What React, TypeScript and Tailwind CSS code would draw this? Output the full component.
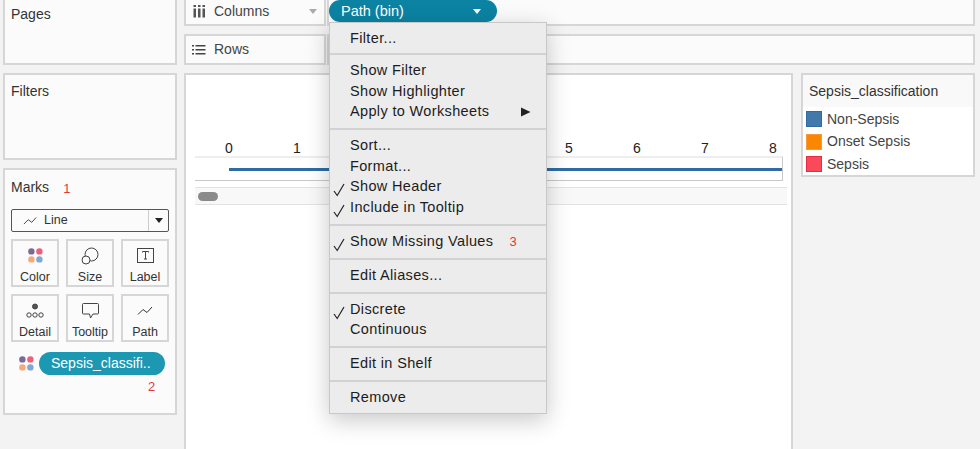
const font = { fontFamily: '"Liberation Sans", Arial, sans-serif' };

function ColorDots() {
  return (
    <svg width="15" height="15" viewBox="0 0 15 15">
      <circle cx="3.4" cy="3.4" r="3.2" fill="#7b6a97" />
      <circle cx="11.4" cy="3.4" r="3.2" fill="#ef5f7a" />
      <circle cx="3.4" cy="11.4" r="3.2" fill="#f7a77a" />
      <circle cx="11.4" cy="11.4" r="3.2" fill="#7ea9d2" />
    </svg>
  );
}

function LineGlyph({ w = 16 }: { w?: number }) {
  return (
    <svg width={w} height="10" viewBox="0 0 16 10" fill="none" stroke="#333" strokeWidth="1">
      <path d="M1 8.5 L6 3.5 L10 6.5 L15 1" />
    </svg>
  );
}

function Tile({ label, icon }: { label: string; icon: React.ReactNode }) {
  return (
    <div className="flex h-[48px] w-[48px] flex-col items-center border-2 border-[#d6d6d6] bg-[#fbfbfb]">
      <div className="mt-[2px] flex h-[25px] items-center justify-center">{icon}</div>
      <div className="mt-[2px] text-[12.5px] leading-[15px] text-[#333]">{label}</div>
    </div>
  );
}

function Check() {
  return (
    <svg className="absolute left-[-17px] top-[6px]" width="12" height="14" viewBox="0 0 12 14" fill="none" stroke="#222" strokeWidth="1.2">
      <path d="M1 8 L4.2 12.5 L11 1" />
    </svg>
  );
}

type MenuItem = { label: string; checked?: boolean; arrow?: boolean; note?: string };

function MenuGroup({ items, first, last }: { items: MenuItem[]; first?: boolean; last?: boolean }) {
  return (
    <div
      className={`pl-[20px] pr-[15px] ${first ? "pt-[5.5px]" : "pt-[6px]"} ${
        last ? "pb-[4px]" : first ? "border-b-2 border-[#d2d2d2] pb-[4px]" : "border-b-2 border-[#d2d2d2] pb-[5.5px]"
      }`}
    >
      {items.map((item) => (
        <div key={item.label} className="relative flex h-[20.5px] items-center text-[14.5px] tracking-[0.35px] text-[#1c1c1c]">
          {item.checked && <Check />}
          <span>{item.label}</span>
          {item.note && <span className="ml-[16px] text-[13px] text-[#e5383b]">{item.note}</span>}
          {item.arrow && (
            <svg className="ml-auto" width="10" height="10" viewBox="0 0 10 10">
              <path d="M0 0.5 L9.5 5 L0 9.5 Z" fill="#222" />
            </svg>
          )}
        </div>
      ))}
    </div>
  );
}

export default function App() {
  // 2, 3 and 4 sit behind the open menu
  const ticks = ["0", "1", "", "", "", "5", "6", "7", "8"];
  return (
    <div style={font} className="relative flex h-[449px] w-[980px] gap-[7px] overflow-hidden bg-[#f3f3f3] pl-[3px] pr-[5px]">
      {/* left cards */}
      <div className="flex w-[174px] shrink-0 flex-col gap-[8px]">
        <div className="h-[65px] border-2 border-t-0 border-[#d6d6d6] bg-[#fbfbfb] px-[6px] pt-[6px] text-[14px] leading-[17px] text-[#333]">Pages</div>
        <div className="h-[87px] border-2 border-[#d6d6d6] bg-[#fbfbfb] px-[6px] pt-[8px] text-[14px] leading-[17px] text-[#333]">Filters</div>
        <div className="h-[247px] border-2 border-[#d6d6d6] bg-[#fbfbfb] px-[6px] pt-[9px]">
          <div className="flex text-[14px] leading-[17px] text-[#333]">
            Marks <span className="ml-[14px] mt-[1px] text-[13px] text-[#e5383b]">1</span>
          </div>
          <div className="mt-[12px] flex h-[23px] w-[158px] items-center rounded-[2px] border-[1.5px] border-[#555] bg-[#fbfbfb] text-[12.5px] text-[#333]">
            <div className="ml-[11px]"><LineGlyph w={14} /></div>
            <span className="ml-[7px]">Line</span>
            <div className="ml-auto flex h-full w-[20px] items-center justify-center border-l border-[#ccc]">
              <svg width="8" height="5" viewBox="0 0 8 5"><path d="M0 0 H8 L4 5 Z" fill="#222" /></svg>
            </div>
          </div>
          <div className="mt-[7px] grid grid-cols-[48px_48px_48px] gap-x-[7px] gap-y-[7px]">
            <Tile label="Color" icon={<ColorDots />} />
            <Tile
              label="Size"
              icon={
                <svg width="18" height="18" viewBox="0 0 18 18" fill="none" stroke="#444" strokeWidth="1">
                  <circle cx="10.5" cy="7.5" r="6.5" />
                  <circle cx="5" cy="13" r="4" fill="#fbfbfb" />
                </svg>
              }
            />
            <Tile
              label="Label"
              icon={
                <svg width="17" height="15" viewBox="0 0 17 15" fill="none" stroke="#444" strokeWidth="1">
                  <rect x="0.5" y="0.5" width="16" height="14" />
                  <path d="M5.5 4.5 V3.5 H11.5 V4.5 M8.5 3.5 V11 M7 11 H10" />
                </svg>
              }
            />
            <Tile
              label="Detail"
              icon={
                <svg width="18" height="16" viewBox="0 0 18 16" fill="none" stroke="#444" strokeWidth="1">
                  <circle cx="9" cy="3.5" r="2.5" fill="#555" />
                  <circle cx="3" cy="12" r="2.2" />
                  <circle cx="9" cy="12" r="2.2" />
                  <circle cx="15" cy="12" r="2.2" />
                </svg>
              }
            />
            <Tile
              label="Tooltip"
              icon={
                <svg width="17" height="16" viewBox="0 0 17 16" fill="none" stroke="#444" strokeWidth="1">
                  <path d="M1.5 0.5 H15.5 Q16.5 0.5 16.5 1.5 V10 Q16.5 11 15.5 11 H11 L8.5 15 L7.5 11 H1.5 Q0.5 11 0.5 10 V1.5 Q0.5 0.5 1.5 0.5 Z" />
                </svg>
              }
            />
            <Tile label="Path" icon={<LineGlyph />} />
          </div>
          <div className="mt-[10px] flex items-center">
            <div className="ml-[8px]"><ColorDots /></div>
            <div className="ml-[5px] flex h-[23px] w-[126px] items-center rounded-full bg-[#1c98b3] pl-[12px] text-[14px] text-white">Sepsis_classifi..</div>
          </div>
          <div className="mt-[4px] pl-[137px] text-[13px] leading-[16px] text-[#e5383b]">2</div>
        </div>
      </div>

      {/* shelves and view */}
      <div className="flex w-[791px] shrink-0 flex-col gap-[8px]">
        <div className="flex h-[26px] gap-[1px]">
          <div className="flex w-[142px] items-center border-2 border-t-0 border-[#d6d6d6] bg-[#fbfbfb] pl-[7px] pb-[1px] text-[14px] text-[#444]">
            <svg width="13" height="13" viewBox="0 0 13 13" fill="#555">
              <rect x="0.5" y="0" width="2.5" height="2" />
              <rect x="5" y="0" width="2.5" height="2" />
              <rect x="9.5" y="0" width="2.5" height="2" />
              <rect x="0.5" y="3.5" width="2.5" height="9" />
              <rect x="5" y="3.5" width="2.5" height="9" />
              <rect x="9.5" y="3.5" width="2.5" height="9" />
            </svg>
            <span className="ml-[8px]">Columns</span>
            <svg className="ml-auto mr-[7px]" width="8" height="5" viewBox="0 0 8 5"><path d="M0 0 H8 L4 5 Z" fill="#aaa" /></svg>
          </div>
          <div className="flex-1 border-2 border-t-0 border-[#d6d6d6] bg-[#fbfbfb]">
            <div className="flex h-[22px] w-[168px] items-center rounded-full bg-[#0c83a3] pl-[12px] pr-[16px] pt-[1px] text-[14.5px] text-white">
              Path (bin)
              <svg className="ml-auto" width="8" height="5" viewBox="0 0 8 5"><path d="M0 0 H8 L4 5 Z" fill="#fff" /></svg>
            </div>
          </div>
        </div>
        <div className="flex h-[31px] gap-[1px]">
          <div className="flex w-[142px] items-center border-2 border-[#d6d6d6] bg-[#fbfbfb] pl-[6px] text-[14px] text-[#444]">
            <svg width="14" height="12" viewBox="0 0 14 12" fill="#444">
              <rect x="0" y="1" width="2" height="1.5" />
              <rect x="3.5" y="1" width="10" height="1.5" />
              <rect x="0" y="5" width="2" height="1.5" />
              <rect x="3.5" y="5" width="10" height="1.5" />
              <rect x="0" y="9" width="2" height="1.5" />
              <rect x="3.5" y="9" width="10" height="1.5" />
            </svg>
            <span className="ml-[8px]">Rows</span>
          </div>
          <div className="flex-1 border-2 border-[#d6d6d6] bg-[#fbfbfb]" />
        </div>

        <div className="flex flex-1 gap-[8px]">
          <div className="w-[609px] border-2 border-b-0 border-[#d6d6d6] bg-white pl-[9px] pt-[65px]">
            <div className="flex h-[16px] items-center text-[14px] text-[#222]">
              {ticks.map((t, i) => (
                <div key={i} className="w-[68px] shrink-0 text-center">{t}</div>
              ))}
            </div>
            <div className="flex h-[25px] w-[588px] items-center border border-t-2 border-l-0 border-[#dcdcdc] border-t-[#eeeeee] border-r-[#c9c9c9] border-b-[#c9c9c9] pl-[34px]">
              <div className="h-[3px] w-full bg-[#2f6ca3]" />
            </div>
            <div className="mt-[6px] flex h-[18px] w-[592px] items-center border-y border-[#e2e2e2] bg-[#f8f8f8] pl-[3px]">
              <div className="h-[9px] w-[20px] rounded-full bg-[#8a8a8a]" />
            </div>
          </div>
          <div className="h-[104px] w-[174px] border-2 border-[#d6d6d6] bg-white">
            <div className="flex h-[32px] items-center bg-[#f9f9f9] pl-[6px] text-[14px] text-[#333]">Sepsis_classification</div>
            <div className="flex flex-col gap-[6.5px] pl-[3px] pt-[4px]">
              {[
                { name: "Non-Sepsis", swatch: "bg-[#4279a8] border-[#2f6ca3]" },
                { name: "Onset Sepsis", swatch: "bg-[#fb8600] border-[#f59b3d]" },
                { name: "Sepsis", swatch: "bg-[#f84a58] border-[#e82a48]" },
              ].map((row) => (
                <div key={row.name} className="flex h-[16px] items-center">
                  <div className={`h-[16px] w-[16px] border ${row.swatch}`} />
                  <span className="ml-[5px] text-[14px] text-[#444]">{row.name}</span>
                </div>
              ))}
            </div>
          </div>
        </div>
      </div>

      {/* open pill menu */}
      <div className="absolute left-[329px] top-[22px] w-[218px] border border-[#c8c8c8] bg-[#ececec] shadow-[0_6px_22px_rgba(0,0,0,0.22)]">
        <MenuGroup first items={[{ label: "Filter..." }]} />
        <MenuGroup items={[{ label: "Show Filter" }, { label: "Show Highlighter" }, { label: "Apply to Worksheets", arrow: true }]} />
        <MenuGroup items={[{ label: "Sort..." }, { label: "Format..." }, { label: "Show Header", checked: true }, { label: "Include in Tooltip", checked: true }]} />
        <MenuGroup items={[{ label: "Show Missing Values", checked: true, note: "3" }]} />
        <MenuGroup items={[{ label: "Edit Aliases..." }]} />
        <MenuGroup items={[{ label: "Discrete", checked: true }, { label: "Continuous" }]} />
        <MenuGroup items={[{ label: "Edit in Shelf" }]} />
        <MenuGroup last items={[{ label: "Remove" }]} />
      </div>
    </div>
  );
}
